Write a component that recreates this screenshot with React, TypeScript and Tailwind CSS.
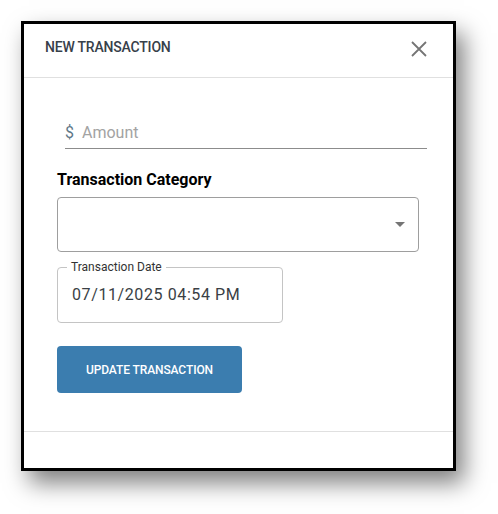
import React from "react";

export default function App() {
  return (
    <div className="w-[498px] h-[514px] bg-white pt-[21px] pl-[21px]" style={{ fontFamily: "Roboto, 'Liberation Sans', sans-serif" }}>
      <div className="w-[435px] h-[450px] border-[3px] border-black bg-white shadow-[8px_12px_22px_rgba(0,0,0,0.5)] flex flex-col">
        <div className="h-[53px] flex items-start justify-between pl-[21px] pr-[25px] border-b border-[#e0e0e0] box-content">
          <div className="mt-[13px] text-[14px] leading-[20px] font-medium text-[#37404a] tracking-[-0.2px]">NEW TRANSACTION</div>
          <svg className="mt-[16px]" width="18" height="18" viewBox="0 0 18 18">
            <path d="M2 2 L16 16 M16 2 L2 16" stroke="#757575" strokeWidth="1.8" fill="none" />
          </svg>
        </div>
        <div className="flex-1 flex flex-col pl-[33px] pt-[39px]">
          <div className="ml-[8px] w-[362px] h-[32px] border-b border-[#8c8c8c] flex items-center">
            <span className="text-[16px] text-[#5f7888] mr-[8px]">$</span>
            <span className="text-[16px] text-[#a3a3a3]">Amount</span>
          </div>
          <div className="mt-[19px] text-[16px] leading-[24px] font-bold text-black">Transaction Category</div>
          <div className="mt-[5px] w-[362px] h-[55px] border border-[#9e9e9e] rounded-[4px] flex items-center justify-end pr-[13px]">
            <svg width="10" height="5" viewBox="0 0 10 5">
              <path d="M0 0 L10 0 L5 5 Z" fill="#757575" />
            </svg>
          </div>
          <div className="relative mt-[15px] w-[226px] h-[56px] border border-[#c4c4c4] rounded-[4px] flex items-center pl-[14px]">
            <span className="absolute left-[9px] top-[-9px] bg-white px-[4px] text-[12px] leading-[16px] text-[#333]">Transaction Date</span>
            <span className="text-[16px] text-[#3a3f45] tracking-[0.6px]">07/11/2025 04:54 PM</span>
          </div>
          <div className="mt-[23px] w-[185px] h-[47px] rounded-[4px] bg-[#3b7daf] flex items-center justify-center">
            <span className="text-[12px] font-medium text-white tracking-[-0.1px]">UPDATE TRANSACTION</span>
          </div>
        </div>
        <div className="h-[36px] border-t border-[#e0e0e0] box-content"></div>
      </div>
    </div>
  );
}
